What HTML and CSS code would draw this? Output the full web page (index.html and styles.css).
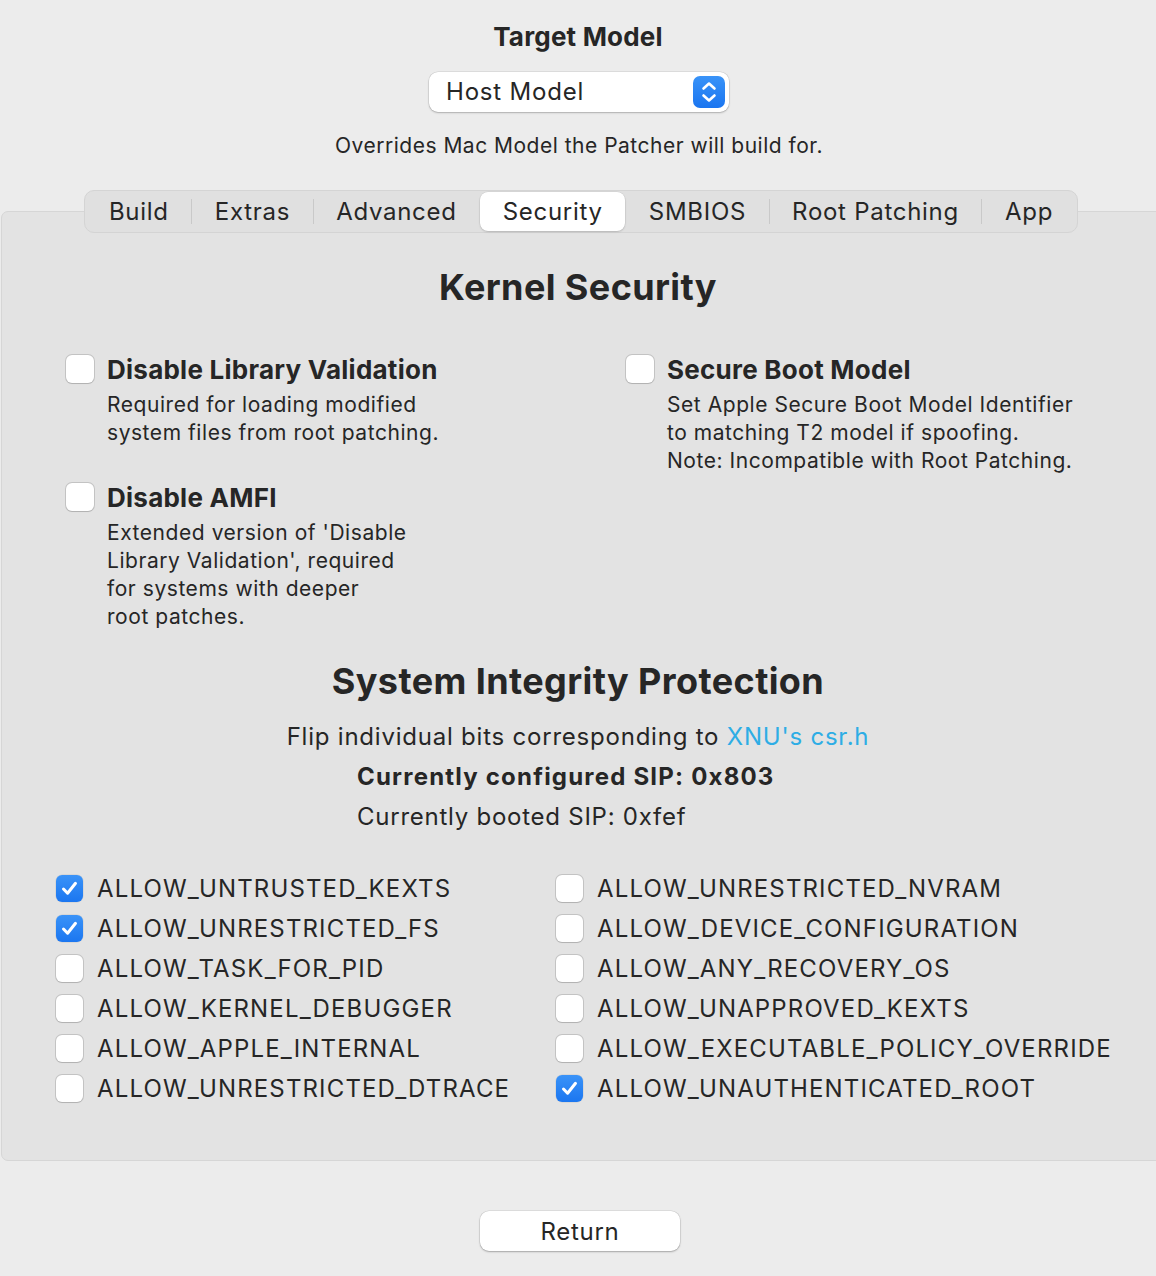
FILE: index.html
```html
<!DOCTYPE html>
<html lang="en">
<head>
<meta charset="utf-8">
<title>Security</title>
<link rel="stylesheet" href="styles.css">
</head>
<body>
<div class="window">
  <header class="top">
    <div class="title">Target Model</div>
    <div class="popup">
      <span class="popup-label">Host Model</span>
      <span class="stepper">
        <svg width="32" height="32" viewBox="0 0 32 32">
          <path d="M10.5 12.5 L16 7.5 L21.5 12.5" fill="none" stroke="#fff" stroke-width="2.6" stroke-linecap="round" stroke-linejoin="round"/>
          <path d="M10.5 19.5 L16 24.5 L21.5 19.5" fill="none" stroke="#fff" stroke-width="2.6" stroke-linecap="round" stroke-linejoin="round"/>
        </svg>
      </span>
    </div>
    <div class="hint">Overrides Mac Model the Patcher will build for.</div>
  </header>

  <nav class="tabs-wrap">
    <div class="tabs">
      <span class="tab">Build</span><span class="sep"></span>
      <span class="tab">Extras</span><span class="sep"></span>
      <span class="tab">Advanced</span><span class="sep hidden"></span>
      <span class="tab active">Security</span><span class="sep hidden"></span>
      <span class="tab">SMBIOS</span><span class="sep"></span>
      <span class="tab">Root Patching</span><span class="sep"></span>
      <span class="tab">App</span>
    </div>
  </nav>

  <main class="panel">
    <h1 class="heading kernel-heading">Kernel Security</h1>

    <div class="kernel-grid">
      <div class="kcol">
        <div class="kitem">
          <span class="cb"></span>
          <div class="ktext">
            <div class="ktitle">Disable Library Validation</div>
            <div class="kdesc">Required for loading modified<br>system files from root patching.</div>
          </div>
        </div>
        <div class="kitem">
          <span class="cb"></span>
          <div class="ktext">
            <div class="ktitle">Disable AMFI</div>
            <div class="kdesc">Extended version of 'Disable<br>Library Validation', required<br>for systems with deeper<br>root patches.</div>
          </div>
        </div>
      </div>
      <div class="kcol">
        <div class="kitem">
          <span class="cb"></span>
          <div class="ktext">
            <div class="ktitle">Secure Boot Model</div>
            <div class="kdesc">Set Apple Secure Boot Model Identifier<br>to matching T2 model if spoofing.<br>Note: Incompatible with Root Patching.</div>
          </div>
        </div>
      </div>
    </div>

    <h2 class="heading sip-heading">System Integrity Protection</h2>
    <p class="flip">Flip individual bits corresponding to <a class="link" href="#">XNU's csr.h</a></p>
    <div class="sip-status">
      <div class="configured">Currently configured SIP: 0x803</div>
      <div class="booted">Currently booted SIP: 0xfef</div>
    </div>

    <div class="sip-grid">
      <div class="srow"><span class="cb on"><svg width="27" height="27" viewBox="0 0 27 27"><path d="M7.5 14 L11.6 18.2 L19.5 8.3" fill="none" stroke="#fff" stroke-width="3" stroke-linecap="round" stroke-linejoin="round"/></svg></span><span>ALLOW_UNTRUSTED_KEXTS</span></div>
      <div class="srow"><span class="cb"></span><span>ALLOW_UNRESTRICTED_NVRAM</span></div>
      <div class="srow"><span class="cb on"><svg width="27" height="27" viewBox="0 0 27 27"><path d="M7.5 14 L11.6 18.2 L19.5 8.3" fill="none" stroke="#fff" stroke-width="3" stroke-linecap="round" stroke-linejoin="round"/></svg></span><span>ALLOW_UNRESTRICTED_FS</span></div>
      <div class="srow"><span class="cb"></span><span>ALLOW_DEVICE_CONFIGURATION</span></div>
      <div class="srow"><span class="cb"></span><span>ALLOW_TASK_FOR_PID</span></div>
      <div class="srow"><span class="cb"></span><span>ALLOW_ANY_RECOVERY_OS</span></div>
      <div class="srow"><span class="cb"></span><span>ALLOW_KERNEL_DEBUGGER</span></div>
      <div class="srow"><span class="cb"></span><span>ALLOW_UNAPPROVED_KEXTS</span></div>
      <div class="srow"><span class="cb"></span><span>ALLOW_APPLE_INTERNAL</span></div>
      <div class="srow"><span class="cb"></span><span>ALLOW_EXECUTABLE_POLICY_OVERRIDE</span></div>
      <div class="srow"><span class="cb"></span><span>ALLOW_UNRESTRICTED_DTRACE</span></div>
      <div class="srow"><span class="cb on"><svg width="27" height="27" viewBox="0 0 27 27"><path d="M7.5 14 L11.6 18.2 L19.5 8.3" fill="none" stroke="#fff" stroke-width="3" stroke-linecap="round" stroke-linejoin="round"/></svg></span><span>ALLOW_UNAUTHENTICATED_ROOT</span></div>
    </div>
  </main>

  <footer class="bottom">
    <button class="return">Return</button>
  </footer>
</div>
</body>
</html>
```

FILE: styles.css
```css
html, body {
  margin: 0;
  padding: 0;
  background: #ececec;
  overflow: hidden;
}
body {
  font-family: Inter, "Liberation Sans", sans-serif;
  color: #262626;
  width: 1156px;
  height: 1276px;
}
.window {
  display: flex;
  flex-direction: column;
}
.top {
  display: flex;
  flex-direction: column;
  align-items: center;
  padding-top: 22px;
}
.title {
  font-size: 26px;
  font-weight: 700;
  line-height: 30px;
  letter-spacing: 0.2px;
}
.popup {
  margin-top: 20px;
  width: 300px;
  height: 40px;
  box-sizing: border-box;
  background: #fff;
  border-radius: 9px;
  box-shadow: 0 0 0 0.5px rgba(0,0,0,0.12), 0 1px 2px rgba(0,0,0,0.22);
  display: flex;
  align-items: center;
  justify-content: space-between;
  padding: 0 4px 0 17px;
  margin-left: 2px;
}
.popup-label {
  font-size: 24px;
  line-height: 30px;
  letter-spacing: 0.8px;
}
.stepper {
  width: 32px;
  height: 32px;
  border-radius: 7px;
  background: linear-gradient(#3993f8, #1a75f0);
  display: flex;
}
.hint {
  margin-top: 20px;
  font-size: 21px;
  line-height: 28px;
  letter-spacing: 0.5px;
  margin-left: 2px;
}
.tabs-wrap {
  display: flex;
  justify-content: center;
  margin-top: 30px;
  position: relative;
  z-index: 1;
}
.tabs {
  display: flex;
  align-items: center;
  height: 43px;
  box-sizing: border-box;
  border: 1px solid #d4d4d4;
  border-radius: 10px;
  background: #e0e0e0;
  padding: 0 1px;
  margin-left: 6px;
}
.tab {
  font-size: 24px;
  line-height: 39px;
  height: 39px;
  padding: 0 22.5px;
  border-radius: 8px;
  letter-spacing: 0.72px;
}
.tab.active {
  background: #fff;
  box-shadow: 0 0 0 0.5px rgba(0,0,0,0.08), 0 1px 2px rgba(0,0,0,0.15);
}
.sep {
  width: 1px;
  height: 25px;
  background: #c9c9c9;
}
.sep.hidden {
  background: transparent;
}
.panel {
  margin-top: -22px;
  margin-left: 1px;
  width: 1166px;
  box-sizing: border-box;
  border: 1px solid #d6d6d6;
  border-radius: 7px;
  background: #e3e3e3;
  padding: 54px 12px 52px 0;
}
.heading {
  margin: 0;
  text-align: center;
  font-size: 36px;
  line-height: 42px;
  font-weight: 700;
  letter-spacing: 0.4px;
}
.kernel-grid {
  margin-top: 47px;
  padding-left: 64px;
  display: grid;
  grid-template-columns: 560px 1fr;
}
.kcol {
  display: flex;
  flex-direction: column;
  gap: 36px;
}
.kitem {
  display: flex;
  gap: 13px;
  align-items: flex-start;
}
.kitem .cb {
  margin-top: 0;
  width: 28px;
  height: 28px;
}
.ktitle {
  font-size: 26px;
  font-weight: 700;
  line-height: 30px;
  letter-spacing: 0.25px;
}
.kdesc {
  margin-top: 6px;
  font-size: 21px;
  line-height: 28px;
  letter-spacing: 0.55px;
}
.cb {
  flex: none;
  width: 27px;
  height: 27px;
  box-sizing: border-box;
  border-radius: 6px;
  background: #fff;
  box-shadow: 0 0 0 1px rgba(0,0,0,0.13), 0 0.5px 1px rgba(0,0,0,0.1);
  display: flex;
}
.cb.on {
  background: linear-gradient(#3a93f8, #1b76f0);
  box-shadow: 0 0 0 0.5px rgba(0,0,0,0.1);
}
.sip-heading {
  margin-top: 29px;
}
.flip {
  margin: 15px 0 0;
  text-align: center;
  font-size: 24px;
  line-height: 40px;
  letter-spacing: 0.78px;
}
.link {
  color: #2eade5;
  text-decoration: none;
}
.sip-status {
  padding-left: 355px;
  font-size: 24px;
  line-height: 40px;
  letter-spacing: 0.75px;
}
.configured {
  font-weight: 700;
  letter-spacing: 1.2px;
}
.sip-grid {
  margin-top: 31px;
  padding-left: 54px;
  display: grid;
  grid-template-columns: 500px 1fr;
}
.srow {
  display: flex;
  align-items: center;
  gap: 14px;
  height: 40px;
  font-size: 24px;
  letter-spacing: 1.15px;
}
.bottom {
  display: flex;
  justify-content: center;
  margin-top: 50px;
}
.return {
  width: 200px;
  height: 40px;
  border: none;
  border-radius: 9px;
  background: #fff;
  box-shadow: 0 0 0 0.5px rgba(0,0,0,0.12), 0 1px 2px rgba(0,0,0,0.25);
  font-family: inherit;
  font-size: 24px;
  letter-spacing: 0.7px;
  color: #262626;
  padding: 0;
  margin-left: 4px;
}
```
